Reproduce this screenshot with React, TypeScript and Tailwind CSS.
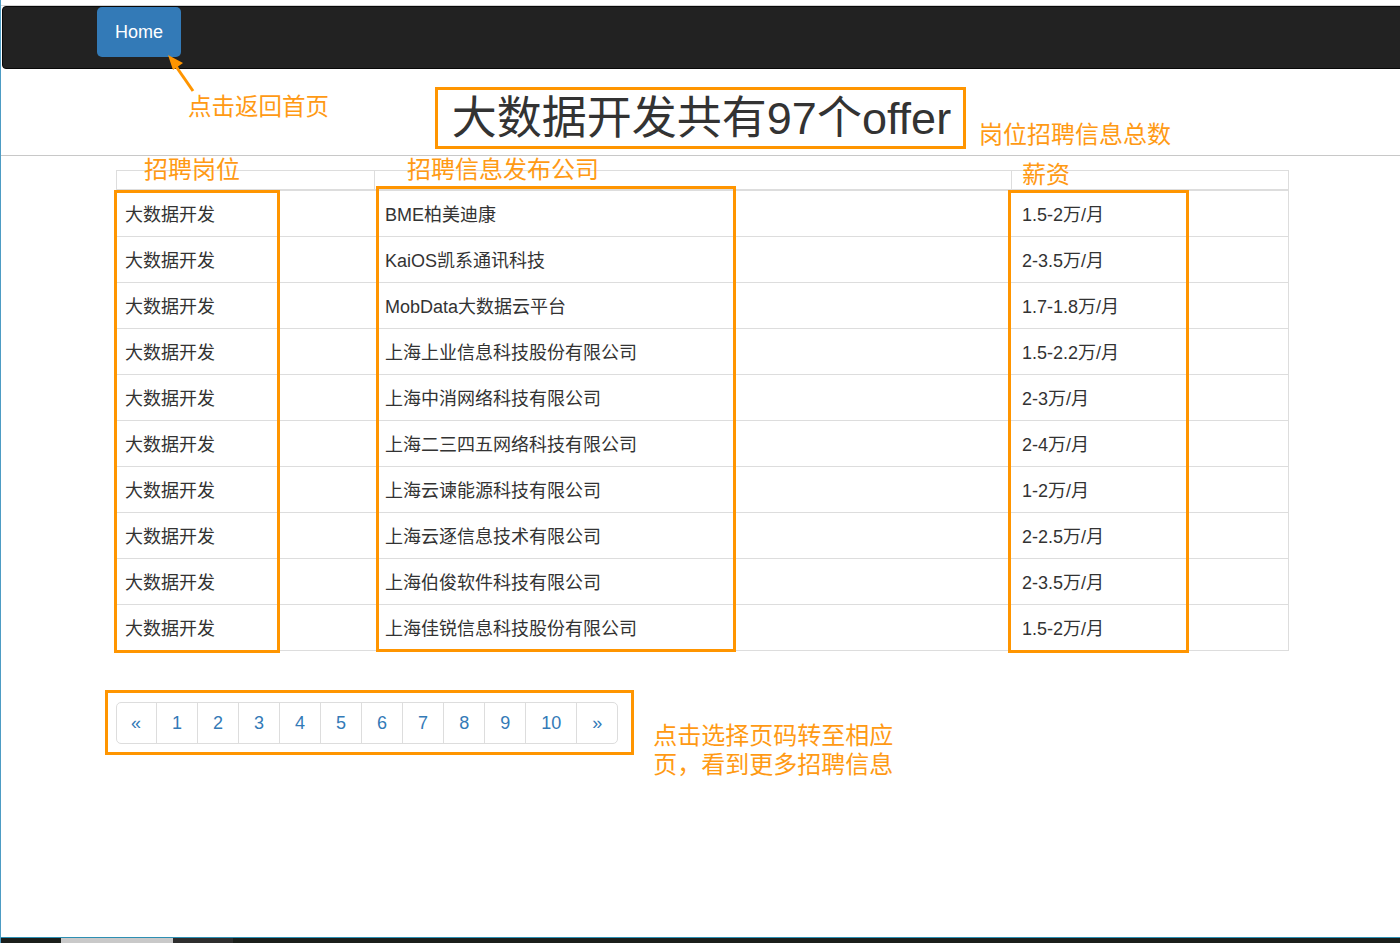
const rows = [
  { job: "大数据开发", company: "BME柏美迪康", salary: "1.5-2万/月" },
  { job: "大数据开发", company: "KaiOS凯系通讯科技", salary: "2-3.5万/月" },
  { job: "大数据开发", company: "MobData大数据云平台", salary: "1.7-1.8万/月" },
  { job: "大数据开发", company: "上海上业信息科技股份有限公司", salary: "1.5-2.2万/月" },
  { job: "大数据开发", company: "上海中消网络科技有限公司", salary: "2-3万/月" },
  { job: "大数据开发", company: "上海二三四五网络科技有限公司", salary: "2-4万/月" },
  { job: "大数据开发", company: "上海云谏能源科技有限公司", salary: "1-2万/月" },
  { job: "大数据开发", company: "上海云逐信息技术有限公司", salary: "2-2.5万/月" },
  { job: "大数据开发", company: "上海伯俊软件科技有限公司", salary: "2-3.5万/月" },
  { job: "大数据开发", company: "上海佳锐信息科技股份有限公司", salary: "1.5-2万/月" },
];

const pages = ["«", "1", "2", "3", "4", "5", "6", "7", "8", "9", "10", "»"];

export default function App() {
  return (
    <div
      className="relative w-[1400px] h-[943px] flex flex-col bg-white border-l border-[#4d9cc4] overflow-hidden text-[#333]"
      style={{ fontFamily: '"Liberation Sans", "Noto Sans CJK SC", sans-serif' }}
    >
      {/* top edge */}
      <div className="h-[6px] border-b border-[#d4d4d4]" />

      {/* navbar */}
      <div className="h-[63px] ml-[1px] mr-[-8px] bg-[#222] border border-[#080808] rounded-[4px] flex items-start pl-[94px]">
        <button className="w-[84px] h-[50px] bg-[#337ab7] rounded-[5px] text-white text-[18px] flex items-center justify-center">
          Home
        </button>
      </div>

      {/* header with total */}
      <div className="h-[86px] flex justify-center">
        <div className="mt-[18px] w-[531px] h-[62px] border-[3px] border-[#ff9500] flex items-center justify-center">
          <h1 className="text-[45px] leading-none text-[#333] pl-[2px]">大数据开发共有97个offer</h1>
        </div>
      </div>

      <div className="border-t border-[#c8c8c8]" />

      {/* table */}
      <div className="pl-[115px] pt-[14px]">
        <div className="relative w-[1173px]">
          <div className="flex h-[21px] border-t border-x border-b-2 border-[#ddd]">
            <div className="w-[258px] border-r border-[#ddd]" />
            <div className="w-[637px] border-r border-[#ddd]" />
            <div className="flex-1" />
          </div>
          {rows.map((r, i) => (
            <div key={i} className="flex h-[46px] items-center pt-[3px] border-x border-b border-[#ddd] text-[18px]">
              <div className="w-[258px] pl-[8px]">{r.job}</div>
              <div className="w-[637px] pl-[10px]">{r.company}</div>
              <div className="flex-1 pl-[10px]">{r.salary}</div>
            </div>
          ))}

          {/* annotation boxes */}
          <div className="absolute left-[-2px] top-[20px] w-[166px] h-[463px] border-[3px] border-[#ff9500]" />
          <div className="absolute left-[260px] top-[16px] w-[360px] h-[466px] border-[3px] border-[#ff9500]" />
          <div className="absolute left-[892px] top-[20px] w-[181px] h-[463px] border-[3px] border-[#ff9500]" />

          <div className="absolute left-[28px] top-[-12px] text-[24px] leading-none text-[#ff9a14] whitespace-nowrap">招聘岗位</div>
          <div className="absolute left-[291px] top-[-12px] text-[24px] leading-none text-[#ff9a14] whitespace-nowrap">招聘信息发布公司</div>
          <div className="absolute left-[906px] top-[-7px] text-[24px] leading-none text-[#ff9a14] whitespace-nowrap">薪资</div>
        </div>
      </div>

      {/* pagination */}
      <div className="flex items-start pl-[104px] mt-[39px]">
        <div className="border-[3px] border-[#ff9500] pl-[8px] pt-[9px] pr-[13px] pb-[8px]">
          <div className="flex border border-[#ddd] rounded-[5px] text-[18px] text-[#337ab7]">
            {pages.map((p, i) => (
              <div
                key={p}
                className={`h-[40px] px-[15px] flex items-center justify-center ${i > 0 ? "border-l border-[#ddd]" : "pl-[14px] pr-[15px]"}`}
              >
                {p}
              </div>
            ))}
          </div>
        </div>
        <div className="ml-[19px] mt-[31px] text-[24px] leading-[29px] text-[#ff9a14] w-[245px]">
          点击选择页码转至相应页，看到更多招聘信息
        </div>
      </div>

      <div className="flex-1" />

      {/* desktop strip */}
      <div className="h-[6px] border-t border-[#2d8fb3] bg-[#1b1f1b] flex">
        <div className="w-[60px]" />
        <div className="w-[112px] bg-[#c9c9c9]" />
        <div className="w-[60px] bg-[#2e2e2e]" />
      </div>

      {/* overlay annotations */}
      <svg className="absolute left-[160px] top-[48px]" width="40" height="48" viewBox="0 0 40 48">
        <line x1="32" y1="43" x2="12" y2="14" stroke="#ff9500" strokeWidth="3" />
        <polygon points="7,7 22,15 12,22" fill="#ff9500" />
      </svg>
      <div className="absolute left-[187px] top-[96px] text-[23.5px] leading-none text-[#ff9a14] whitespace-nowrap">点击返回首页</div>
      <div className="absolute left-[978px] top-[123px] text-[24px] leading-none text-[#ff9a14] whitespace-nowrap">岗位招聘信息总数</div>
    </div>
  );
}
